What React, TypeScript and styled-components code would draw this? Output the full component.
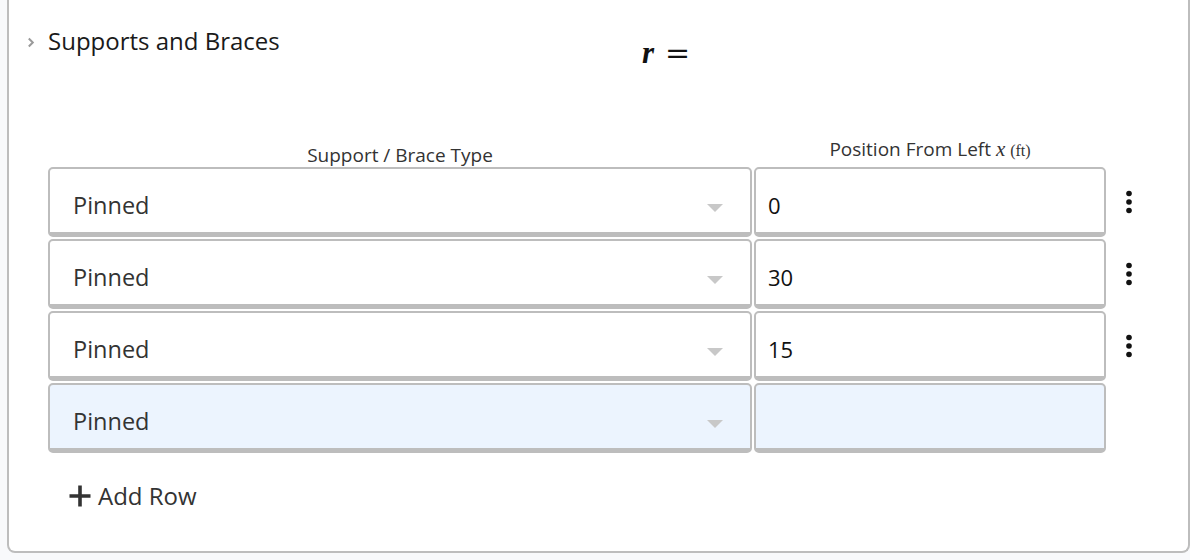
import React from "react";
import styled, { createGlobalStyle } from "styled-components";

const GlobalStyle = createGlobalStyle`
  html, body {
    margin: 0;
    padding: 0;
    background: #f8f9fb;
    font-family: "Open Sans", "Noto Sans", sans-serif;
  }
`;

const Page = styled.div`
  padding-left: 7px;
  height: 560px;
  box-sizing: border-box;
`;

const Panel = styled.section`
  box-sizing: border-box;
  height: 553px;
  background: #ffffff;
  border: 2px solid #bdbdbd;
  border-top: none;
  border-radius: 0 0 8px 8px;
  padding-left: 18px;
  display: flex;
  flex-direction: column;
`;

const Header = styled.div`
  height: 84px;
  display: flex;
  align-items: center;
  position: relative;
`;

const Chevron = styled.svg`
  width: 8px;
  height: 11px;
  margin-right: 13px;
  margin-top: 1px;
`;

const Title = styled.h2`
  margin: -3px 0 0 0;
  font-size: 24px;
  font-weight: 400;
  color: #1a1a1a;
`;

const MathLabel = styled.div`
  position: absolute;
  left: 615px;
  top: 35px;
  color: #111;
  display: flex;
  align-items: baseline;
  gap: 11px;
`;

const Var = styled.span`
  font-family: "Liberation Serif", "DejaVu Serif", serif;
  font-size: 31px;
  font-style: italic;
  font-weight: 700;
`;

const Equals = styled.span`
  font-family: "DejaVu Serif", serif;
  font-size: 30px;
`;

const Table = styled.div`
  margin-left: 21px;
  margin-top: 53px;
  display: grid;
  grid-template-columns: 704px 352px 46px;
  grid-template-rows: 28px;
  grid-auto-rows: 70px;
  column-gap: 2px;
  row-gap: 2px;
`;

const ColLabel = styled.div<{ $lift?: number }>`
  font-size: 19px;
  line-height: 20px;
  color: #333;
  text-align: center;
  align-self: end;
  white-space: nowrap;
  padding-bottom: ${(p) => p.$lift ?? 0}px;
`;

const MathX = styled.span`
  font-family: "Liberation Serif", "DejaVu Serif", serif;
  font-style: italic;
  font-size: 21px;
`;

const Unit = styled.span`
  font-family: "Liberation Serif", "DejaVu Serif", serif;
  font-size: 16px;
`;

const Cell = styled.div<{ $blank?: boolean }>`
  box-sizing: border-box;
  height: 70px;
  border: 2px solid #bdbdbd;
  border-bottom-width: 5px;
  border-radius: 5px;
  background: ${(p) => (p.$blank ? "#ecf4fe" : "#ffffff")};
  display: flex;
  align-items: center;
  padding-top: 8px;
`;

const SelectCell = styled(Cell)`
  padding-left: 23px;
  padding-right: 27px;
  justify-content: space-between;
  font-size: 23.5px;
  color: #333;
`;

const InputCell = styled(Cell)`
  padding-left: 12px;
  font-size: 22px;
  color: #111;
`;

const Caret = styled.span`
  width: 0;
  height: 0;
  border-left: 8px solid transparent;
  border-right: 8px solid transparent;
  border-top: 8px solid #c8c8c8;
  margin-top: 7px;
`;

const MenuSlot = styled.div`
  display: flex;
  align-items: center;
  justify-content: center;
  padding-right: 4px;
`;

const Dots = styled.svg`
  width: 8px;
  height: 24px;
`;

const AddRow = styled.button`
  margin: 26px 0 0 42px;
  align-self: flex-start;
  border: none;
  background: none;
  padding: 0;
  display: flex;
  align-items: center;
  gap: 7px;
  font-family: inherit;
  font-size: 24px;
  color: #333;
  cursor: pointer;
`;

const PlusIcon = styled.svg`
  width: 22px;
  height: 22px;
`;

const rows = [
  { type: "Pinned", x: "0", menu: true },
  { type: "Pinned", x: "30", menu: true },
  { type: "Pinned", x: "15", menu: true },
  { type: "Pinned", x: "", menu: false, blank: true },
];

const App: React.FC = () => {
  return (
    <Page>
      <GlobalStyle />
      <Panel>
        <Header>
          <Chevron viewBox="0 0 8 11">
            <path d="M1.8 1.5 L5.8 5.5 L1.8 9.5" fill="none" stroke="#9a9a9a" strokeWidth="2" />
          </Chevron>
          <Title>Supports and Braces</Title>
          <MathLabel>
            <Var>r</Var>
            <Equals>=</Equals>
          </MathLabel>
        </Header>

        <Table>
          <ColLabel>Support / Brace Type</ColLabel>
          <ColLabel $lift={4}>
            Position From Left <MathX>x</MathX> <Unit>(ft)</Unit>
          </ColLabel>
          <div />
          {rows.map((r, i) => (
            <React.Fragment key={i}>
              <SelectCell $blank={r.blank}>
                <span>{r.type}</span>
                <Caret />
              </SelectCell>
              <InputCell $blank={r.blank}>{r.x}</InputCell>
              <MenuSlot>
                {r.menu && (
                  <Dots viewBox="0 0 8 24">
                    <circle cx="4" cy="3.5" r="2.8" fill="#111" />
                    <circle cx="4" cy="12" r="2.8" fill="#111" />
                    <circle cx="4" cy="20.5" r="2.8" fill="#111" />
                  </Dots>
                )}
              </MenuSlot>
            </React.Fragment>
          ))}
        </Table>

        <AddRow>
          <PlusIcon viewBox="0 0 22 22">
            <path d="M11 0.5 V21.5 M0.5 11 H21.5" stroke="#333" strokeWidth="3.6" />
          </PlusIcon>
          Add Row
        </AddRow>
      </Panel>
    </Page>
  );
};

export default App;
